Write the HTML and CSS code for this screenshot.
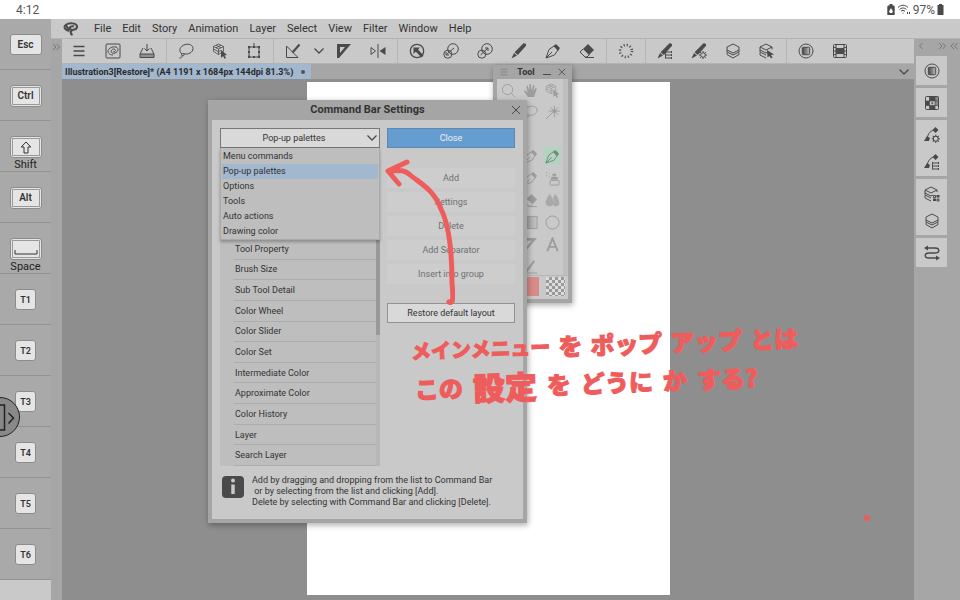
FILE: index.html
```html
<!DOCTYPE html>
<html lang="en">
<head>
<meta charset="utf-8">
<title>Illustration3 - Command Bar Settings</title>
<link rel="stylesheet" href="styles.css">
</head>
<body>
<svg class="defs" aria-hidden="true">
  <defs>
    <linearGradient id="shade" x1="0" y1="0" x2="1" y2="0"><stop offset="0" stop-color="#444"/><stop offset="1" stop-color="#bbb"/></linearGradient>
    <symbol id="grad" viewBox="0 0 16 16"><circle cx="8" cy="8" r="7"/><rect x="4.3" y="4.3" width="7.4" height="7.4" rx="1" fill="url(#shade)"/></symbol>
    <symbol id="layers" viewBox="0 0 16 16"><path d="M8 1l6 3v3L8 10 2 7V4z"/><path d="M2 7v2l6 3 6-3V7M2 9.500v2L8 15l6-3.500v-2"/></symbol>
    <symbol id="cube" viewBox="0 0 16 16"><path d="M6.500 1l5 2.500v5L6.500 11.500l-5-3v-5zM1.500 3.500l5 2.500 5-2.500M6.500 6v5.500M4 2.200l5 2.600M9 2.200L4 4.800M1.500 6l5 2.700 3-1.500" stroke-width=".8"/><path class="f" d="M9 7l6 5-2.500.4 1.500 2.600-1.500.7-1.400-2.700L9 15z"/></symbol>
    <symbol id="lasso" viewBox="0 0 16 16"><path d="M4 11C0 8 2 3 7 1.600c4-1.200 8 .4 8 3.900 0 4-5 6.500-9 5.200-2-.7-3 .8-2 1.800s2.700-.2 2-1.300M4 12.500c0 2-1 2.500-2.500 2.500"/></symbol>
    <symbol id="pen" viewBox="0 0 16 16"><path d="M1 15l3-8.500L9 3l4 4-3.500 5zM1 15l6-6"/><path class="f" d="M8.500 3L11 1l4 4-2 3z"/></symbol>
    <symbol id="eraser" viewBox="0 0 16 16"><path class="f" d="M9 1l6 6-5 5-6-6z"/><path d="M4 6L1 9l5 5h2l2.500-2.500M6 14.500h9"/></symbol>
    <symbol id="ruler" viewBox="0 0 16 16"><path class="f" fill-rule="evenodd" d="M1 1h14L3 15H1zM4 4v6l5-6z"/></symbol>
    <symbol id="gear" viewBox="0 0 8 8"><circle cx="4" cy="4" r="2.300"/><path d="M4 0v1.500M4 6.500V8M0 4h1.500M6.500 4H8M1.200 1.200l1 1M5.800 5.800l1 1M6.800 1.200l-1 1M1.200 6.800l1-1"/></symbol>
    <symbol id="brush" viewBox="0 0 16 16"><path class="f" d="M12 .8c1.500-1.300 4 .6 2.800 2.300L6.800 12 3.600 9.300z"/><path class="f" d="M3 10l3 2.600L.500 15.500z"/></symbol>
    <symbol id="curvepen" viewBox="0 0 16 16"><path d="M3 12C4 6 7 3 11 3"/><path class="f" d="M11.500 0l3 3-3 3-3-3zM3 9l3 2-1 3H0z"/></symbol>
    <symbol id="sliders" viewBox="0 0 8 8"><path d="M.5 0v7.500M.5 1h6M.5 4h6M.5 7h6M6.500 0v2M6.500 3v2M6.500 6v2"/></symbol>
    <symbol id="x" viewBox="0 0 10 10"><path d="M1 1l8 8M9 1L1 9"/></symbol>
    <symbol id="burger" viewBox="0 0 16 16"><path d="M2.500 3.500h11M2.500 8h11M2.500 12.500h11" stroke-width="1.500"/></symbol>
    <symbol id="down" viewBox="0 0 12 8"><path d="M1.500 1.500L6 6l4.500-4.500" stroke-width="1.300"/></symbol>
    <symbol id="ovals" viewBox="0 0 16 16"><circle cx="10" cy="6" r="5.300"/><circle cx="4.800" cy="11.200" r="4"/></symbol>
  </defs>
</svg>

<header class="status">
  <span>4:12</span>
  <span class="status-right">
    <svg width="8" height="11" viewBox="0 0 8 11"><path class="f" fill-rule="evenodd" d="M2.500 0h3v1.500H7l.7 1V11H.3V2.500l.7-1h1.500zM4 4L2 7.500 3 9h2l1-1.500z"/></svg>
    <svg width="14" height="11" viewBox="0 0 14 11"><path d="M1 3.500c3-3 7-3 10 0M2.500 5.500c2-2 5-2 7 0M4 7.300c1.200-1.200 2.800-1.200 4 0M5.500 9h1M10.500 8v2M12.500 8v2"/></svg>
    <span>97%</span>
    <svg width="7" height="11" viewBox="0 0 7 11"><path class="f" d="M2 0h3v1h1.500v10h-6V1H2z"/></svg>
  </span>
</header>

<div class="shell">
  <aside class="keys" aria-label="Edge keyboard">
    <div class="keyrow"><button class="key wide">Esc</button></div>
    <div class="keyrow"><button class="key wide double">Ctrl</button></div>
    <div class="keyrow"><button class="key wide double" id="k-shift" aria-label="Shift"><svg width="12" height="13" viewBox="0 0 12 13"><path d="M6 1l4.800 5H8v6H4V6H1.200z"/></svg></button><label for="k-shift">Shift</label></div>
    <div class="keyrow"><button class="key wide double">Alt</button></div>
    <div class="keyrow"><button class="key wide double" id="k-space" aria-label="Space"><svg width="24" height="14" viewBox="0 0 24 14"><path d="M1 8v4h22V8"/></svg></button><label for="k-space">Space</label></div>
    <div class="keyrow"><button class="key">T1</button></div>
    <div class="keyrow"><button class="key">T2</button></div>
    <div class="keyrow"><button class="key">T3</button></div>
    <div class="keyrow"><button class="key">T4</button></div>
    <div class="keyrow"><button class="key">T5</button></div>
    <div class="keyrow"><button class="key">T6</button></div>
  </aside>

  <div class="app">
    <nav class="menu">
      <svg class="logo" width="16" height="14" viewBox="0 0 16 14"><path d="M6.500 9C2 8.500 0 5 3 2.800 6 .6 13 .8 14 4c.6 3.500-5 5-7 3C6 5 9 3.800 11 4.300M4 3.500c-.5 2 1 3.500 3 3.500M9 8.500c-2 1-1.500 3.500.5 4.500"/></svg>
      <a href="#file">File</a><a href="#edit">Edit</a><a href="#story">Story</a><a href="#animation">Animation</a><a href="#layer">Layer</a><a href="#select">Select</a><a href="#view">View</a><a href="#filter">Filter</a><a href="#window">Window</a><a href="#help">Help</a>
    </nav>
    <div class="work">
      <div class="strip"><svg width="8" height="8" viewBox="0 0 8 8"><path d="M1 1l3 3-3 3M4.500 1l3 3-3 3"/></svg></div>
      <main class="main">
        <div class="toolbar">
          <div class="group">
            <button aria-label="Menu"><svg><use href="#burger"/></svg></button>
            <button aria-label="Home"><svg viewBox="0 0 16 16"><rect x="1" y="1" width="14" height="14" rx="1"/><path d="M8 12c-4 0-6-3-4.500-5.500s8-4 9.300-1S9 12 6.500 9.500C5 7.500 8 5 10 6.500c1.500 1.500-1 3-2 2"/></svg></button>
            <button aria-label="Save"><svg viewBox="0 0 16 16"><path d="M4 5L1 11v3.500h14V11l-3-6M1 11h14M8 1v6.500M5.500 5.500L8 8l2.500-2.500"/><path class="f" d="M1 11h14v3H1z" opacity=".45"/></svg></button>
          </div>
          <div class="group">
            <button aria-label="Lasso"><svg><use href="#lasso"/></svg></button>
            <button aria-label="Object"><svg><use href="#cube"/></svg></button>
            <button aria-label="Transform"><svg viewBox="0 0 16 16"><path d="M3 4h10v10H3zM8 0v4"/><path class="f" d="M2 3h2.200v2.200H2zM11.800 3H14v2.200h-2.200zM2 12.800h2.200V15H2zM11.800 12.800H14V15h-2.200zM7 3h2v2H7zM7 13h2v2H7zM2 8h2v2H2zM12 8h2v2h-2z"/></svg></button>
          </div>
          <div class="group">
            <button aria-label="Snap to ruler"><svg viewBox="0 0 16 16"><path d="M1.500 3v11.500H13L1.500 3"/><path d="M14.500 1.500L7.500 9.500" stroke-width="2"/></svg></button>
            <button class="slim" aria-label="More rulers"><svg><use href="#down"/></svg></button>
            <button aria-label="Special ruler"><svg><use href="#ruler"/></svg></button>
            <button aria-label="Flip"><svg viewBox="0 0 16 16"><path d="M1 4.500v7L5.500 8zM8 1v14"/><path class="f" d="M15.500 4v8L9.500 8z"/></svg></button>
          </div>
          <div class="group">
            <button aria-label="Operation"><svg viewBox="0 0 16 16"><circle cx="8" cy="8" r="6.700" stroke-width="1.300"/><path class="f" d="M4.500 4.500h6.500L9 6.500l5.500 6-2 2L6.800 8.800 4.500 11z"/></svg></button>
            <button aria-label="Zoom in"><svg viewBox="0 0 16 16"><use href="#ovals"/><path d="M3.500 11.500L11 5M3 9v3h3"/></svg></button>
            <button aria-label="Zoom out"><svg viewBox="0 0 16 16"><use href="#ovals"/><path d="M3.500 12L11 5M8 5h3v3"/></svg></button>
            <button aria-label="Pencil"><svg><use href="#brush"/></svg></button>
            <button aria-label="Pen"><svg><use href="#pen"/></svg></button>
            <button aria-label="Eraser"><svg><use href="#eraser"/></svg></button>
          </div>
          <div class="group">
            <button aria-label="Loading"><svg viewBox="0 0 16 16"><circle cx="8" cy="8" r="6" stroke-width="2.500" stroke-dasharray="1.100 2.040"/></svg></button>
          </div>
          <div class="group">
            <button aria-label="Sub tool"><svg viewBox="0 0 16 16"><use href="#brush"/><use href="#sliders" x="8" y="8" width="8" height="8"/></svg></button>
            <button aria-label="Tool property"><svg viewBox="0 0 16 16"><use href="#brush"/><use href="#gear" x="8" y="8" width="8" height="8"/></svg></button>
            <button aria-label="Layer"><svg><use href="#layers"/></svg></button>
            <button aria-label="Layer property"><svg viewBox="0 0 16 16"><path d="M7 1l6 3v2.500M7 1L1 4v3l6 3 2-1M1 7v2l6 3M1 9.500V12l6 3M1 4l6 3 6-3"/><path class="f" d="M8 7l7 4.500-3 .5 1.500 2.500-1.500 1-1.500-2.500-2 1.500z"/></svg></button>
          </div>
          <div class="group">
            <button aria-label="Color"><svg><use href="#grad"/></svg></button>
            <button aria-label="Timeline"><svg viewBox="0 0 16 16"><rect x="1.500" y="1.500" width="13" height="13" rx="1"/><path d="M4 1.500v13M12 1.500v13M1.500 4.500H4M1.500 8H4M1.500 11.500H4M12 4.500h2.500M12 8h2.500M12 11.500h2.500"/><path class="f" d="M4 5h8v6H4z"/></svg></button>
          </div>
        </div>
        <div class="tabs">
          <div class="tab">Illustration3[Restore]* (A4 1191 x 1684px 144dpi 81.3%)<i></i></div>
          <svg width="12" height="8"><use href="#down"/></svg>
        </div>
        <div class="canvas"><div class="paper"></div></div>
      </main>
      <aside class="dock">
        <div class="dock-head">
          <svg width="6" height="8" viewBox="0 0 6 8"><path d="M4.500 1l-3 3 3 3"/></svg>
          <svg width="8" height="8" viewBox="0 0 8 8"><path d="M1 1l3 3-3 3M4.500 1l3 3-3 3"/></svg>
          <svg width="8" height="8" viewBox="0 0 8 8"><path d="M4 1L1 4l3 3M7.500 1l-3 3 3 3"/></svg>
        </div>
        <div class="dock-group"><button aria-label="Color wheel"><svg><use href="#grad"/></svg></button></div>
        <div class="dock-group"><button aria-label="Color set"><svg viewBox="0 0 16 16"><rect x="1.500" y="1.500" width="13" height="13" rx="1"/><path class="f" d="M5.500 1.500H11V6H5.500zM1.500 6h4v4.500h-4zM5.500 10.500H11v4H5.500z"/><path class="f" opacity=".5" d="M11 1.500h3.500V6H11zM11 6h3.500v4.500H11z"/><path stroke-width=".7" d="M1.500 6h13M1.500 10.500h13M5.500 1.500v13M11 1.500v13M8.200 7v2.500M7 8.200h2.500"/></svg></button></div>
        <div class="dock-group">
          <button aria-label="Tool property"><svg viewBox="0 0 16 16"><use href="#curvepen"/><use href="#gear" x="7.500" y="7.500" width="8.500" height="8.500"/></svg></button>
          <button aria-label="Sub tool detail"><svg viewBox="0 0 16 16"><use href="#curvepen"/><use href="#sliders" x="8" y="8" width="8" height="8"/></svg></button>
        </div>
        <div class="dock-group">
          <button aria-label="Layer property"><svg viewBox="0 0 16 16"><path d="M7 1l6 3v2M7 1L1 4v3l6 3 2-1M1 7v2l6 3M1 9.500V12l6 3M1 4l6 3 6-3M9.500 9.500h2v2h-2zM13 13h2v2h-2z"/><path class="f" d="M12.500 9h3v2.500h-3zM9 12.500h3V15H9z"/></svg></button>
          <button aria-label="Layer"><svg><use href="#layers"/></svg></button>
        </div>
        <div class="dock-group"><button aria-label="Auto action"><svg viewBox="0 0 16 16"><path d="M3 3h8c5 0 5 5 0 5H5c-5 0-5 5 0 5h8" stroke-width="1.400"/><path class="f" d="M0 3l4-2.500v5zM16 13l-4-2.500v5z"/></svg></button></div>
      </aside>
    </div>
  </div>
</div>

<section class="window tool-window" aria-label="Tool">
  <header><svg width="10" height="10"><use href="#burger"/></svg><h2>Tool</h2><button aria-label="Minimize"><svg width="8" height="8" viewBox="0 0 8 8"><path d="M0 6.500h8"/></svg></button><button aria-label="Close tool"><svg width="8" height="8"><use href="#x"/></svg></button></header>
  <div class="tools">
    <button aria-label="Magnify"><svg viewBox="0 0 16 16"><circle cx="7" cy="7" r="5.500"/><path d="M11 11l4 4"/></svg></button>
    <button aria-label="Move"><svg viewBox="0 0 16 16"><path class="f" d="M5 15L1 8.500l1.200-.8L5 10 3.500 3.500 5 3l1.500 5L7 1h1.500l.3 7L11 2l1.400.4L11 9l2.500-4 1.200.6L12 15z"/></svg></button>
    <button aria-label="Operate"><svg><use href="#cube"/></svg></button>
    <button aria-label="Move layer"></button>
    <button aria-label="Selection"><svg><use href="#lasso"/></svg></button>
    <button aria-label="Auto select"><svg viewBox="0 0 16 16"><path d="M1 15l8-8M10 1v12M4 6.500h12M6 2.500l8 8M14 2.500l-5 5"/><circle class="f" cx="10" cy="6.500" r="2"/></svg></button>
    <span></span><span></span><span></span>
    <button aria-label="Eyedropper"></button>
    <button aria-label="Pencil"><svg><use href="#pen"/></svg></button>
    <button class="on" aria-label="Pen"><svg><use href="#pen"/></svg></button>
    <button aria-label="Brush"></button>
    <button aria-label="Airbrush pen"><svg><use href="#pen"/></svg></button>
    <button aria-label="Airbrush"><svg viewBox="0 0 16 16"><rect x="5.500" y="10" width="9.500" height="5" rx="1"/><path class="f" d="M6 8c0-3 8-3 8 0v1H6zM8 3h4v2H8zM1 1h1v1H1zM4 2h1v1H4zM1 4h1v1H1zM4 5h1v1H4z"/></svg></button>
    <button aria-label="Decoration"></button>
    <button aria-label="Eraser"><svg><use href="#eraser"/></svg></button>
    <button aria-label="Blend"><svg viewBox="0 0 16 16"><path class="f" opacity=".7" d="M5 1C2 5 0 9 1 12s7 3 8 0-1-7-4-11zM11 1c3 4 5 8 4 11s-6 3-6 0c1-3 0-6-.500-7z"/></svg></button>
    <button aria-label="Fill"></button>
    <button aria-label="Gradient"><svg viewBox="0 0 16 16"><rect x="1" y="1.500" width="14" height="13" fill="url(#shade)"/></svg></button>
    <button aria-label="Figure"><svg viewBox="0 0 16 16"><circle cx="8" cy="8" r="7"/></svg></button>
    <button aria-label="Frame"></button>
    <button aria-label="Ruler"><svg><use href="#ruler"/></svg></button>
    <button aria-label="Text"><svg viewBox="0 0 16 16"><path d="M2.500 15L8 1.500 13.500 15M4.500 10.500h7" stroke-width="2"/></svg></button>
    <button aria-label="Balloon"></button>
    <button aria-label="Correct line"><svg viewBox="0 0 16 16"><path d="M3 14l9-12" stroke-width="2"/><path d="M1 15h14"/></svg></button>
  </div>
  <div class="swatches"><span class="main-color"></span><span class="clear-color"></span></div>
</section>

<section class="window dialog" role="dialog" aria-labelledby="dlg-title">
  <header><h1 id="dlg-title">Command Bar Settings</h1><button aria-label="Close window"><svg width="10" height="10"><use href="#x"/></svg></button></header>
  <div class="body">
    <div class="picker">
      <div class="combo">
        <select aria-label="Category"><option>Pop-up palettes</option></select>
        <svg width="12" height="8"><use href="#down"/></svg>
        <ul class="options" role="listbox" aria-label="Categories">
          <li role="option">Menu commands</li><li role="option" aria-selected="true">Pop-up palettes</li><li role="option">Options</li><li role="option">Tools</li><li role="option">Auto actions</li><li role="option">Drawing color</li>
        </ul>
      </div>
      <div class="listbox">
        <ul>
          <li>Tool Property</li><li>Brush Size</li><li>Sub Tool Detail</li><li>Color Wheel</li><li>Color Slider</li><li>Color Set</li><li>Intermediate Color</li><li>Approximate Color</li><li>Color History</li><li>Layer</li><li>Search Layer</li>
        </ul>
        <div class="track"><div class="thumb"></div></div>
      </div>
    </div>
    <div class="actions">
      <button class="primary">Close</button>
      <div class="edits">
        <button disabled>Add</button><button disabled>Settings</button><button disabled>Delete</button><button disabled>Add Separator</button><button disabled>Insert into group</button>
      </div>
      <button class="plain">Restore default layout</button>
    </div>
    <div class="info">
      <svg width="24" height="24" viewBox="0 0 24 24"><rect class="f" x="1" y="1" width="22" height="22" rx="4"/><path d="M12 9.500V19" stroke="#c9c9c9" stroke-width="3.500"/><circle cx="12" cy="5.500" r="2" fill="#c9c9c9" stroke="none"/></svg>
      <p>Add by dragging and dropping from the list to Command Bar<br>&nbsp;or by selecting from the list and clicking [Add].<br>Delete by selecting with Command Bar and clicking [Delete].</p>
    </div>
  </div>
</section>

<button class="handle" aria-label="Open edge panel"><svg width="20" height="40" viewBox="0 0 20 40"><path d="M-2 7h6.500v25H-2zM8.500 15l5 5-5 5.500" stroke-width="1.500"/></svg></button>

<div class="notes" lang="ja">
  <svg class="arrow" width="70" height="146" viewBox="0 0 70 146"><path d="M64 143C69 146 68 135 67 124 67 95 64 66 56 50 48 29 34 24 24 15 18 10 12 12 5 12M22 3L3 12l11 13"/></svg>
  <p class="line one"><span class="small">メインメニュー</span><span>を</span><span>ポップ</span><span>アップ</span><span>とは</span></p>
  <p class="line two"><span>この</span><span class="large">設定</span><span>を</span><span>どうに</span><span>か</span><span>する?</span></p>
  <i class="dot"></i>
</div>
</body>
</html>
```
FILE: styles.css
```css
* { box-sizing: border-box; }
body {
  margin: 0;
  min-height: 100vh;
  display: flex;
  flex-direction: column;
  position: relative;
  overflow: hidden;
  background: #fff;
  color: #333;
  font: 9px/12px Roboto, "Liberation Sans", sans-serif;
}
button, select { font: inherit; color: inherit; border: 0; padding: 0; margin: 0; background: none; }
h1, h2, p, ul { margin: 0; padding: 0; }
ul { list-style: none; }
a { color: inherit; text-decoration: none; }
svg { fill: none; stroke: #4a4a4a; stroke-width: 1; display: block; flex: none; }
.f { fill: #4a4a4a; stroke: none; }
.defs { position: absolute; width: 0; height: 0; }

.status { height: 19px; padding: 0 16px; display: flex; align-items: center; justify-content: space-between; font-size: 12px; color: #555; }
.status-right { display: flex; align-items: center; gap: 2px; }

.shell { flex: 1; display: flex; }
.keys { width: 51px; background: #c9c9c9; flex: none; }
.keyrow { height: 51px; padding-top: 15px; display: flex; flex-direction: column; align-items: center; background: #a9a9a9; border-bottom: 1px solid #929292; }
.keyrow label { font-size: 11px; line-height: 14px; color: #222; }
.key { width: 21px; height: 21px; flex: none; display: flex; align-items: center; justify-content: center; background: #e5e5e5; border: 1px solid #8c8c8c; border-radius: 3px; font-weight: 600; color: #333; }
.key.wide { width: 32px; font-size: 10px; }
.key.double { height: 22px; box-shadow: inset 0 0 0 1px #e5e5e5, inset 0 0 0 2px #999; }
.key svg { stroke: #333; }

.app { flex: 1; min-width: 0; display: flex; flex-direction: column; }
.menu { height: 20px; display: flex; align-items: center; gap: 11px; padding-left: 12px; background: #c9c9c9; border-bottom: 1px solid #b3b3b3; font-size: 11px; }
.logo { margin-right: 4px; stroke-width: 2; }
.work { flex: 1; display: flex; }
.strip { width: 11px; padding: 4px 1px; background: #a6a6a6; }
.strip svg, .dock-head svg { stroke: #777; }
.main { flex: 1; min-width: 0; display: flex; flex-direction: column; }

.toolbar { height: 25px; display: flex; background: #c9c9c9; border-bottom: 1px solid #b3b3b3; }
.group { display: flex; padding-right: 2px; margin-right: 2px; border-right: 1px solid #b5b5b5; }
.group:last-child { border: 0; }
.group button { width: 34px; display: grid; place-items: center; }
.group svg { width: 16px; height: 16px; }
.group .slim { width: 17px; }
.group .slim svg { width: 12px; height: 8px; }

.tabs { height: 15px; display: flex; align-items: center; justify-content: space-between; padding-right: 4px; background: #a6a6a6; }
.tab { height: 15px; padding: 0 6px 0 3px; display: flex; align-items: center; gap: 8px; background: #a2b8cf; font-weight: 700; color: #2b2b2b; }
.tab i { width: 4px; height: 4px; border-radius: 50%; background: #555; }
.canvas { flex: 1; display: flex; justify-content: center; padding: 3px 0 5px; background: #8e8e8e; }
.paper { height: 100%; min-height: 513px; aspect-ratio: 363 / 513; background: #fff; }

.dock { width: 46px; flex: none; padding-left: 2px; background: #a6a6a6; display: flex; flex-direction: column; gap: 3px; }
.dock-head { height: 14px; display: flex; align-items: center; padding: 0 2px; }
.dock-head svg:nth-child(2) { margin-left: auto; margin-right: 4px; }
.dock-group { width: 31px; background: #c9c9c9; padding: 1px 0; display: flex; flex-direction: column; }
.dock-group button { height: 27px; display: grid; place-items: center; }
.dock-group svg { width: 16px; height: 16px; }

.window { position: absolute; border: 4px solid #a5a5a5; border-top: 0; background: #c9c9c9; box-shadow: 1px 2px 6px #0005; }
.window > header { display: flex; align-items: center; background: #a5a5a5; }
.window h1, .window h2 { text-align: center; font-weight: 700; }

.tool-window { left: 493px; top: 65px; width: 79px; }
.tool-window > header { height: 14px; gap: 7px; padding: 0 2px; }
.tool-window > header > svg { stroke: #888; }
.tool-window h2 { flex: 1; font-size: 9px; }
.tools { display: grid; grid-template-columns: repeat(3, 22px); grid-auto-rows: 22px; height: 196px; border-right: 5px solid #bfbfbf; }
.tools button { display: grid; place-items: center; }
.tools svg { width: 15px; height: 15px; opacity: .35; }
.tools .on { width: 18px; height: 18px; margin: 2px; background: #b2d3bf; }
.tools .on svg { opacity: .55; }
.swatches { display: flex; justify-content: flex-end; gap: 7px; padding: 1px 3px 3px; border-top: 1px solid #b5b5b5; }
.swatches span { width: 19px; height: 19px; }
.main-color { background: #d98b88; }
.clear-color { background: repeating-conic-gradient(#999 0 25%, #ddd 0 50%) 0 0 / 6px 6px; }

.dialog { left: 208px; top: 100px; width: 319px; }
.dialog > header { height: 20px; display: grid; grid-template-columns: 1fr auto; }
.dialog > header h1 { grid-area: 1 / 1 / 2 / 3; font-size: 11px; }
.dialog > header button { grid-area: 1 / 2; padding-right: 2px; }
.body { display: grid; grid-template-columns: 160px 1fr; column-gap: 7px; padding: 8px; height: 399px; align-content: start; }
.combo { position: relative; }
.combo select { width: 100%; height: 20px; display: block; appearance: none; border: 1px solid #777; background: #d9d9d9; text-align: center; text-align-last: center; padding-right: 12px; }
.combo > svg { position: absolute; right: 2px; top: 6px; }
.options { position: absolute; top: 20px; left: 0; right: 0; padding: 1px 1px 0; background: #bebebe; border: 1px solid #aaa; border-top: 0; box-shadow: 0 2px 3px #0004; }
.options li { height: 15px; line-height: 15px; padding-left: 1px; }
.options [aria-selected] { background: #a2b8cf; }
.listbox { height: 318px; display: flex; padding-top: 91px; background: #bebebe; }
.listbox ul { flex: 1; display: grid; grid-template-rows: repeat(11, 1fr); margin-left: 14px; }
.listbox li { display: flex; align-items: center; padding-left: 1px; border-bottom: 1px solid #adadad; }
.track { width: 4px; background: #b7b7b7; }
.thumb { height: 96px; background: #999; }
.actions { display: flex; flex-direction: column; }
.actions button { height: 20px; }
.primary { background: #669dd0; border: 1px solid #5c87b0; color: #eee; }
.edits { display: flex; flex-direction: column; gap: 4px; margin: 20px 0; }
.edits button { background: #cdcdcd; color: #6f6f6f; }
.plain { margin-top: -1px; background: #d9d9d9; border: 1px solid #929292; }
.info { grid-column: 1 / 3; display: flex; gap: 7px; margin-top: 9px; padding-left: 1px; }
.info p { line-height: 11px; white-space: nowrap; }

.handle { position: absolute; left: -20px; top: 397px; width: 40px; height: 40px; border: 1px solid #222; border-radius: 50%; background: #888; padding-left: 19px; }
.handle svg { stroke: #222; }

.notes { position: absolute; inset: 0; pointer-events: none; color: #ee5c5c; font: 900 24px/32px "Noto Sans CJK JP", sans-serif; -webkit-text-stroke: 1px #ee5c5c; }
.arrow { position: absolute; left: 385px; top: 159px; stroke: #ee5c5c; stroke-width: 5; stroke-linecap: round; stroke-linejoin: round; }
.line { position: absolute; display: flex; align-items: center; white-space: nowrap; transform: rotate(-2deg); transform-origin: 0 50%; }
.line .small { font-size: 20px; }
.line .large { font-size: 32px; }
.one { left: 411px; top: 335px; gap: 8px; }
.two { left: 415px; top: 373px; gap: 10px; }
.dot { position: absolute; left: 864px; top: 515px; width: 6px; height: 6px; border-radius: 50%; background: #ee5c5c; }
```
